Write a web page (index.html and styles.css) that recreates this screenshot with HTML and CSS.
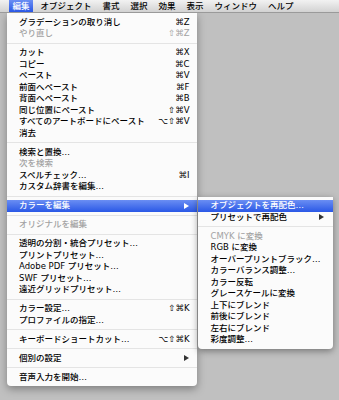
FILE: index.html
```html
<!DOCTYPE html>
<html lang="ja">
<head>
<meta charset="utf-8">
<link rel="stylesheet" href="styles.css">
</head>
<body>
<div class="menubar">
  <span class="mb-item active">編集</span>
  <span class="mb-item">オブジェクト</span>
  <span class="mb-item">書式</span>
  <span class="mb-item">選択</span>
  <span class="mb-item">効果</span>
  <span class="mb-item">表示</span>
  <span class="mb-item">ウィンドウ</span>
  <span class="mb-item">ヘルプ</span>
</div>
<div class="menu">
  <div class="item"><span>グラデーションの取り消し</span><span class="key">⌘Z</span></div>
  <div class="item dis"><span>やり直し</span><span class="key">⇧⌘Z</span></div>
  <div class="sep"></div>
  <div class="item"><span>カット</span><span class="key">⌘X</span></div>
  <div class="item"><span>コピー</span><span class="key">⌘C</span></div>
  <div class="item"><span>ペースト</span><span class="key">⌘V</span></div>
  <div class="item"><span>前面へペースト</span><span class="key">⌘F</span></div>
  <div class="item"><span>背面へペースト</span><span class="key">⌘B</span></div>
  <div class="item"><span>同じ位置にペースト</span><span class="key">⇧⌘V</span></div>
  <div class="item"><span>すべてのアートボードにペースト</span><span class="key">⌥⇧⌘V</span></div>
  <div class="item"><span>消去</span></div>
  <div class="sep"></div>
  <div class="item"><span>検索と置換…</span></div>
  <div class="item dis"><span>次を検索</span></div>
  <div class="item"><span>スペルチェック…</span><span class="key">⌘I</span></div>
  <div class="item"><span>カスタム辞書を編集…</span></div>
  <div class="sep"></div>
  <div class="item sel has-sub"><span>カラーを編集</span><span class="arrow"></span>
    <div class="submenu">
      <div class="item sel"><span>オブジェクトを再配色…</span></div>
      <div class="item"><span>プリセットで再配色</span><span class="arrow"></span></div>
      <div class="sep"></div>
      <div class="item dis"><span>CMYK に変換</span></div>
      <div class="item"><span>RGB に変換</span></div>
      <div class="item"><span>オーバープリントブラック…</span></div>
      <div class="item"><span>カラーバランス調整…</span></div>
      <div class="item"><span>カラー反転</span></div>
      <div class="item"><span>グレースケールに変換</span></div>
      <div class="item"><span>上下にブレンド</span></div>
      <div class="item"><span>前後にブレンド</span></div>
      <div class="item"><span>左右にブレンド</span></div>
      <div class="item"><span>彩度調整…</span></div>
    </div>
  </div>
  <div class="sep"></div>
  <div class="item dis"><span>オリジナルを編集</span></div>
  <div class="sep"></div>
  <div class="item"><span>透明の分割・統合プリセット…</span></div>
  <div class="item"><span>プリントプリセット…</span></div>
  <div class="item"><span>Adobe PDF プリセット…</span></div>
  <div class="item"><span>SWF プリセット…</span></div>
  <div class="item"><span>遠近グリッドプリセット…</span></div>
  <div class="sep"></div>
  <div class="item"><span>カラー設定…</span><span class="key">⇧⌘K</span></div>
  <div class="item"><span>プロファイルの指定…</span></div>
  <div class="sep"></div>
  <div class="item"><span>キーボードショートカット…</span><span class="key">⌥⇧⌘K</span></div>
  <div class="sep"></div>
  <div class="item"><span>個別の設定</span><span class="arrow"></span></div>
  <div class="sep"></div>
  <div class="item"><span>音声入力を開始…</span></div>
</div>
</body>
</html>
```

FILE: styles.css
```css
html, body {
  margin: 0;
  padding: 0;
}
body {
  background: #c0c0c0;
  font-family: "DejaVu Sans", "Noto Sans CJK JP", sans-serif;
  font-size: 8.5px;
  font-weight: 500;
  color: #000;
  width: 339px;
  height: 400px;
  overflow: hidden;
}
.menubar {
  height: 13px;
  display: flex;
  align-items: stretch;
  gap: 4px;
  padding-left: 9px;
  background: linear-gradient(#f2f2f2, #d2d2d2);
  border-bottom: 1px solid #9a9a9a;
  box-sizing: border-box;
  position: relative;
  z-index: 2;
}
.mb-item {
  padding: 0 3.5px;
  line-height: 12px;
  color: #000;
}
.mb-item.active {
  background: linear-gradient(#6a8ef3, #2a58e6);
  color: #fff;
}
.menu {
  margin-left: 7px;
  width: 190px;
  background: #fbfbfb;
  padding: 3.5px 0 3px;
  border-radius: 0 0 4px 4px;
  box-shadow: 0 3px 8px rgba(0, 0, 0, 0.35);
  position: relative;
  z-index: 1;
}
.item {
  height: 11.5px;
  line-height: 11.5px;
  display: flex;
  justify-content: space-between;
  align-items: center;
  padding: 0 7.5px 0 12px;
  white-space: nowrap;
}
.item.dis {
  color: #a2a2a2;
}
.item.sel {
  background: linear-gradient(#6a8ef3, #2a58e6);
  color: #fff;
}
.key {
  font-family: "DejaVu Sans", sans-serif;
}
.sep {
  height: 1px;
  margin: 3.25px 0;
  background: #e4e4e4;
}
.arrow {
  width: 0;
  height: 0;
  border-top: 3px solid transparent;
  border-bottom: 3px solid transparent;
  border-left: 5px solid #333;
  margin-right: 1px;
}
.item.sel > .arrow {
  border-left-color: #fff;
}
.has-sub {
  position: relative;
}
.submenu {
  position: absolute;
  left: 191px;
  top: -3.5px;
  width: 135px;
  background: #fbfbfb;
  padding: 3.5px 0 3.5px;
  border-radius: 0 0 4px 4px;
  box-shadow: 0 2px 7px rgba(0, 0, 0, 0.4);
  color: #000;
}
.submenu .item {
  padding: 0 8px 0 12.5px;
}
.submenu .item.dis {
  color: #a2a2a2;
}
.submenu .item.sel {
  color: #fff;
}
```
